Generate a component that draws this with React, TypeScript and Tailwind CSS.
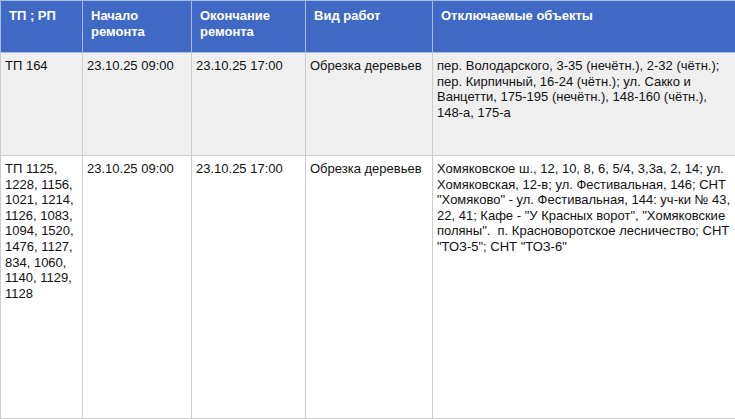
const rows = [
  {
    tp: "ТП 164",
    start: "23.10.25 09:00",
    end: "23.10.25 17:00",
    kind: "Обрезка деревьев",
    objects:
      "пер. Володарского, 3-35 (нечётн.), 2-32 (чётн.); пер. Кирпичный, 16-24 (чётн.); ул. Сакко и Ванцетти, 175-195 (нечётн.), 148-160 (чётн.), 148-а, 175-а",
    height: "h-[103px]",
    bg: "bg-[#efefef]",
  },
  {
    tp: "ТП 1125, 1228, 1156, 1021, 1214, 1126, 1083, 1094, 1520, 1476, 1127, 834, 1060, 1140, 1129, 1128",
    start: "23.10.25 09:00",
    end: "23.10.25 17:00",
    kind: "Обрезка деревьев",
    objects:
      'Хомяковское ш., 12, 10, 8, 6, 5/4, 3,3а, 2, 14; ул. Хомяковская, 12-в; ул. Фестивальная, 146; СНТ "Хомяково" - ул. Фестивальная, 144: уч-ки № 43, 22, 41; Кафе - "У Красных ворот", "Хомяковские поляны".  п. Красноворотское лесничество; СНТ "ТОЗ-5"; СНТ "ТОЗ-6"',
    height: "h-[263px]",
    bg: "bg-white",
  },
];

const headers = ["ТП ; РП", "Начало ремонта", "Окончание ремонта", "Вид работ", "Отключаемые объекты"];

export default function App() {
  return (
    <div className="w-[735px] h-[419px] bg-white font-['Liberation_Sans',Arial,sans-serif] text-[13px] leading-[1.2] text-[#111]">
      <table className="w-[735px] table-fixed border-collapse">
        <colgroup>
          <col className="w-[82px]" />
          <col className="w-[109px]" />
          <col className="w-[114px]" />
          <col className="w-[127px]" />
          <col className="w-[303px]" />
        </colgroup>
        <thead>
          <tr className="h-[52px] bg-[#3f69c4]">
            {headers.map((h) => (
              <th
                key={h}
                className="border border-[#a9bde6] px-[8px] pt-[7px] align-top text-left font-bold text-white whitespace-pre-wrap"
              >
                {h}
              </th>
            ))}
          </tr>
        </thead>
        <tbody>
          {rows.map((r, i) => (
            <tr key={i} className={`${r.height} ${r.bg}`}>
              {[r.tp, r.start, r.end, r.kind, r.objects].map((c, j) => (
                <td key={j} className="border border-[#cccccc] px-[4px] pt-[5px] align-top whitespace-pre-wrap">
                  {c}
                </td>
              ))}
            </tr>
          ))}
        </tbody>
      </table>
    </div>
  );
}
